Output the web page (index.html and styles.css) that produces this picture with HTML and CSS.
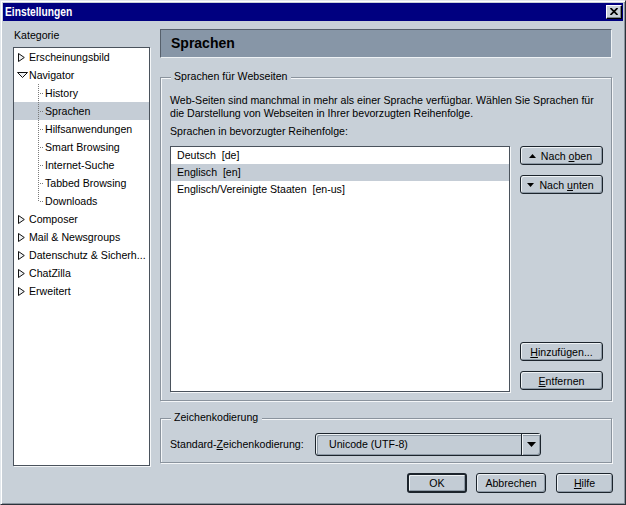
FILE: index.html
```html
<!DOCTYPE html>
<html lang="de">
<head>
<meta charset="utf-8">
<title>Einstellungen</title>
<link rel="stylesheet" href="styles.css">
</head>
<body>
<div class="window">
  <div class="titlebar">
    <span class="title">Einstellungen</span>
    <span class="close-btn"><svg width="8" height="7" viewBox="0 0 8 7"><path d="M0.5 0 L7.5 7 M7.5 0 L0.5 7" stroke="#000" stroke-width="1.7" fill="none"/></svg></span>
  </div>
  <div class="content">
    <div class="sidebar">
      <div class="cat-label">Kategorie</div>
      <div class="tree">
        <div class="row top"><span class="twisty"><svg width="7" height="9" viewBox="0 0 7 9"><polygon points="0.5,0.5 6.3,4.5 0.5,8.5" fill="#eef1f4" stroke="#111"/></svg></span><span>Erscheinungsbild</span></div>
        <div class="row top"><span class="twisty open"><svg width="11" height="6" viewBox="0 0 11 6"><polygon points="0.5,0.5 10.5,0.5 5.5,5.5" fill="#eef1f4" stroke="#111"/></svg></span><span>Navigator</span></div>
        <div class="row child"><span class="branch"></span><span>History</span></div>
        <div class="row child selected"><span class="branch"></span><span>Sprachen</span></div>
        <div class="row child"><span class="branch"></span><span>Hilfsanwendungen</span></div>
        <div class="row child"><span class="branch"></span><span>Smart Browsing</span></div>
        <div class="row child"><span class="branch"></span><span>Internet-Suche</span></div>
        <div class="row child"><span class="branch"></span><span>Tabbed Browsing</span></div>
        <div class="row child last"><span class="branch"></span><span>Downloads</span></div>
        <div class="row top"><span class="twisty"><svg width="7" height="9" viewBox="0 0 7 9"><polygon points="0.5,0.5 6.3,4.5 0.5,8.5" fill="#eef1f4" stroke="#111"/></svg></span><span>Composer</span></div>
        <div class="row top"><span class="twisty"><svg width="7" height="9" viewBox="0 0 7 9"><polygon points="0.5,0.5 6.3,4.5 0.5,8.5" fill="#eef1f4" stroke="#111"/></svg></span><span>Mail &amp; Newsgroups</span></div>
        <div class="row top"><span class="twisty"><svg width="7" height="9" viewBox="0 0 7 9"><polygon points="0.5,0.5 6.3,4.5 0.5,8.5" fill="#eef1f4" stroke="#111"/></svg></span><span>Datenschutz &amp; Sicherh...</span></div>
        <div class="row top"><span class="twisty"><svg width="7" height="9" viewBox="0 0 7 9"><polygon points="0.5,0.5 6.3,4.5 0.5,8.5" fill="#eef1f4" stroke="#111"/></svg></span><span>ChatZilla</span></div>
        <div class="row top"><span class="twisty"><svg width="7" height="9" viewBox="0 0 7 9"><polygon points="0.5,0.5 6.3,4.5 0.5,8.5" fill="#eef1f4" stroke="#111"/></svg></span><span>Erweitert</span></div>
      </div>
    </div>
    <div class="main">
      <div class="page-header">Sprachen</div>
      <div class="group group-lang">
        <span class="legend">Sprachen für Webseiten</span>
        <div class="desc">Web-Seiten sind manchmal in mehr als einer Sprache verfügbar. Wählen Sie Sprachen für<br>die Darstellung von Webseiten in Ihrer bevorzugten Reihenfolge.</div>
        <div class="list-label">Sprachen in bevorzugter Reihenfolge:</div>
        <div class="list-row">
          <div class="list">
            <div class="item">Deutsch&nbsp; [de]</div>
            <div class="item selected">Englisch&nbsp; [en]</div>
            <div class="item">Englisch/Vereinigte Staaten&nbsp; [en-us]</div>
          </div>
          <div class="side-buttons">
            <button class="btn side"><svg width="7" height="4" viewBox="0 0 7 4"><polygon points="0,4 3.5,0 7,4" fill="#000"/></svg><span>Nach <u>o</u>ben</span></button>
            <button class="btn side"><svg width="7" height="4" viewBox="0 0 7 4"><polygon points="0,0 7,0 3.5,4" fill="#000"/></svg><span>Nach <u>u</u>nten</span></button>
            <span class="spacer"></span>
            <button class="btn side"><span><u>H</u>inzufügen...</span></button>
            <button class="btn side"><span><u>E</u>ntfernen</span></button>
          </div>
        </div>
      </div>
      <div class="group group-enc">
        <span class="legend">Zeichenkodierung</span>
        <div class="enc-row">
          <span class="enc-label">Standard-<u>Z</u>eichenkodierung:</span>
          <div class="dropdown">
            <span class="dd-value">Unicode (UTF-8)</span>
            <span class="dd-arrow"><svg width="9" height="5" viewBox="0 0 9 5"><polygon points="0,0 9,0 4.5,5" fill="#000"/></svg></span>
          </div>
        </div>
      </div>
    </div>
  </div>
  <div class="footer">
    <button class="btn dlg default w-ok"><span>OK</span></button>
    <button class="btn dlg w-cancel"><span>Abbrechen</span></button>
    <button class="btn dlg w-help"><span><u>H</u>ilfe</span></button>
  </div>
</div>
</body>
</html>
```
FILE: styles.css
```css
* { box-sizing: border-box; }
html, body { margin: 0; padding: 0; }
body {
  width: 626px;
  height: 505px;
  overflow: hidden;
  background: #c8d0d8;
  font-family: "Liberation Sans", Arial, sans-serif;
  font-size: 10.6px;
  line-height: 13px;
  color: #000;
}
u { text-decoration: underline; text-underline-offset: 1px; }

.window {
  width: 626px;
  height: 505px;
  border: 1px solid;
  border-color: #e2e7ec #2c323a #2c323a #e2e7ec;
  box-shadow: inset 1px 1px 0 #ffffff, inset -1px -1px 0 #8a949e;
  padding: 2px;
  background: #c8d0d8;
  display: flex;
  flex-direction: column;
}

.titlebar {
  height: 18px;
  background: #000080;
  display: flex;
  align-items: center;
  justify-content: space-between;
  padding: 0 1px 0 2px;
}
.title {
  color: #fff;
  font-weight: bold;
  font-size: 12.5px;
  display: inline-block;
  transform: scaleX(0.82);
  transform-origin: left center;
}
.close-btn {
  width: 16px;
  height: 14px;
  background: #c8d0d8;
  border: 1px solid;
  border-color: #ffffff #000 #000 #ffffff;
  box-shadow: inset -1px -1px 0 #7d8791;
  display: flex;
  align-items: center;
  justify-content: center;
  padding-bottom: 1px;
}

.content {
  display: grid;
  grid-template-columns: 137px 452px;
  column-gap: 10px;
  padding: 8px 10px 0 10px;
}

.cat-label { height: 13px; margin-bottom: 5px; padding-left: 1px; }
.tree {
  height: 419px;
  background: #fff;
  border: 1px solid #4a525c;
  box-shadow: 1px 1px 0 #f4f6f8;
}
.row {
  height: 18px;
  display: flex;
  align-items: center;
  white-space: nowrap;
}
.row.selected { background: #c5cdd6; }
.twisty {
  width: 12px;
  margin-left: 3px;
  display: flex;
  align-items: center;
}
.twisty svg { margin-left: 1px; }
.twisty.open svg { margin-left: 0; }
.child { padding-left: 24px; }
.branch {
  position: relative;
  width: 7px;
  height: 18px;
  flex: none;
  background: repeating-linear-gradient(to bottom, #7a7a7a 0 1px, transparent 1px 2px);
  background-size: 1px 18px;
  background-repeat: no-repeat;
}
.branch::after {
  content: "";
  position: absolute;
  left: 1px;
  top: 9px;
  width: 5px;
  height: 1px;
  background: repeating-linear-gradient(to right, transparent 0 1px, #7a7a7a 1px 2px);
}
.child.last .branch {
  background: repeating-linear-gradient(to bottom, #7a7a7a 0 1px, transparent 1px 2px);
  background-size: 1px 10px;
  background-repeat: no-repeat;
}

.main { display: flex; flex-direction: column; }
.page-header {
  height: 29px;
  background: #8796a7;
  border: 1px solid;
  border-color: #56606c #eef2f5 #eef2f5 #56606c;
  font-weight: bold;
  font-size: 14px;
  line-height: 27px;
  padding-left: 10px;
}

.group {
  position: relative;
  border: 1px solid #8a939d;
  box-shadow: 1px 1px 0 #f4f6f8, inset 1px 1px 0 #f4f6f8;
  padding: 0 8px 0 9px;
}
.legend {
  position: absolute;
  top: -8px;
  left: 10px;
  padding: 0 4px 0 3px;
  background: #c8d0d8;
  line-height: 13px;
}
.group-lang { margin-top: 19px; height: 324px; padding-top: 16px; }
.desc { white-space: nowrap; }
.list-label { margin-top: 5px; }
.list-row { display: flex; gap: 10px; margin-top: 8px; }
.list {
  width: 340px;
  height: 246px;
  background: #fff;
  border: 1px solid #4a525c;
  box-shadow: 1px 1px 0 #f4f6f8;
}
.item {
  height: 17px;
  line-height: 17px;
  padding-left: 6px;
  white-space: nowrap;
}
.item.selected { background: #c5cdd6; }

.side-buttons {
  width: 83px;
  height: 244px;
  display: flex;
  flex-direction: column;
  gap: 10px;
}
.spacer { flex: 1; }

.btn {
  font-family: "Liberation Sans", Arial, sans-serif;
  font-size: 10.6px;
  color: #000;
  background: #c3ccd5;
  border: 1px solid #1c242c;
  border-radius: 3px;
  box-shadow: inset 1px 1px 0 #eef2f5, inset -1px -1px 0 #8e9aa6;
  padding: 0;
  display: flex;
  align-items: center;
  justify-content: center;
  gap: 5px;
  white-space: nowrap;
}
.btn.side { height: 19px; width: 83px; }
.btn.side svg { margin-left: -2px; }

.group-enc { margin-top: 17px; height: 45px; padding-top: 14px; }
.enc-row { display: flex; align-items: center; }
.enc-label { width: 145px; flex: none; white-space: nowrap; }
.dropdown {
  width: 226px;
  height: 23px;
  border: 1px solid #1c242c;
  border-radius: 3px;
  background: #c3ccd5;
  box-shadow: inset 1px 1px 0 #eef2f5, inset -1px -1px 0 #8e9aa6, inset 2px 2px 0 #8e9aa6;
  display: flex;
  align-items: stretch;
}
.dd-value { flex: 1; padding-left: 13px; line-height: 21px; }
.dd-arrow {
  width: 19px;
  border-left: 1px solid #1c242c;
  box-shadow: inset 1px 1px 0 #eef2f5;
  display: flex;
  align-items: center;
  justify-content: center;
}

.footer {
  display: flex;
  justify-content: flex-end;
  padding: 0 10px 0 0;
  margin-top: 7px;
}
.btn.dlg { height: 20px; }
.w-ok { width: 60px; }
.w-cancel { width: 70px; margin-left: 9px; }
.w-help { width: 57px; margin-left: 10px; }
.btn.default { border-width: 2px; }
```
